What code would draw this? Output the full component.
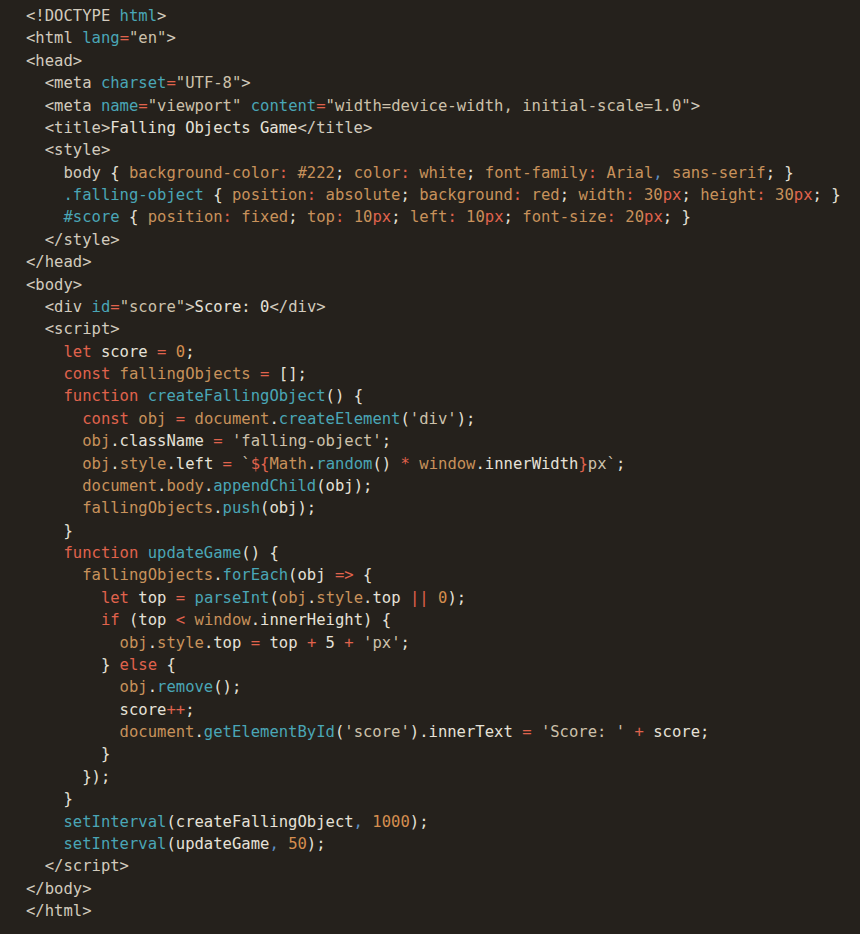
import { FC } from 'react';

// token colours
const T = 'text-[#d2cbbe]'; // tags / punctuation
const P = 'text-[#e6e1d8]'; // plain identifiers
const A = 'text-[#4aa6b6]'; // attrs, functions, selectors
const K = 'text-[#e0634d]'; // keywords, operators
const V = 'text-[#c8925b]'; // variables, css props
const N = 'text-[#d58e4f]'; // numbers
const S = 'text-[#cdc1ab]'; // strings
const B = 'text-[#5d8fc4]'; // commas in args

type Tok = [string, string];

const lines: Tok[][] = [
  [[T, '<!DOCTYPE '], [A, 'html'], [T, '>']],
  [[T, '<html '], [A, 'lang'], [K, '='], [S, '"en"'], [T, '>']],
  [[T, '<head>']],
  [[T, '  <meta '], [A, 'charset'], [K, '='], [S, '"UTF-8"'], [T, '>']],
  [[T, '  <meta '], [A, 'name'], [K, '='], [S, '"viewport"'], [T, ' '], [A, 'content'], [K, '='], [S, '"width=device-width, initial-scale=1.0"'], [T, '>']],
  [[T, '  <title>'], [P, 'Falling Objects Game'], [T, '</title>']],
  [[T, '  <style>']],
  [[T, '    body '], [P, '{ '], [V, 'background-color'], [K, ':'], [V, ' #222'], [P, '; '], [V, 'color'], [K, ':'], [V, ' white'], [P, '; '], [V, 'font-family'], [K, ':'], [V, ' Arial'], [B, ','], [V, ' sans-serif'], [P, '; }']],
  [[T, '    '], [A, '.falling-object'], [P, ' { '], [V, 'position'], [K, ':'], [V, ' absolute'], [P, '; '], [V, 'background'], [K, ':'], [V, ' red'], [P, '; '], [V, 'width'], [K, ':'], [V, ' 30'], [K, 'px'], [P, '; '], [V, 'height'], [K, ':'], [V, ' 30'], [K, 'px'], [P, '; }']],
  [[T, '    '], [A, '#score'], [P, ' { '], [V, 'position'], [K, ':'], [V, ' fixed'], [P, '; '], [V, 'top'], [K, ':'], [V, ' 10'], [K, 'px'], [P, '; '], [V, 'left'], [K, ':'], [V, ' 10'], [K, 'px'], [P, '; '], [V, 'font-size'], [K, ':'], [V, ' 20'], [K, 'px'], [P, '; }']],
  [[T, '  </style>']],
  [[T, '</head>']],
  [[T, '<body>']],
  [[T, '  <div '], [A, 'id'], [K, '='], [S, '"score"'], [T, '>'], [P, 'Score: 0'], [T, '</div>']],
  [[T, '  <script>']],
  [[K, '    let'], [P, ' score '], [K, '='], [P, ' '], [N, '0'], [P, ';']],
  [[K, '    const'], [V, ' fallingObjects'], [P, ' '], [K, '='], [P, ' [];']],
  [[K, '    function'], [P, ' '], [A, 'createFallingObject'], [P, '() {']],
  [[K, '      const'], [V, ' obj'], [P, ' '], [K, '='], [V, ' document'], [P, '.'], [A, 'createElement'], [P, '('], [S, "'div'"], [P, ');']],
  [[V, '      obj'], [P, '.className '], [K, '='], [P, ' '], [S, "'falling-object'"], [P, ';']],
  [[V, '      obj'], [P, '.'], [V, 'style'], [P, '.left '], [K, '='], [P, ' '], [S, '`'], [K, '${'], [V, 'Math'], [P, '.'], [A, 'random'], [P, '() '], [K, '*'], [V, ' window'], [P, '.innerWidth'], [K, '}'], [S, 'px`'], [P, ';']],
  [[V, '      document'], [P, '.'], [V, 'body'], [P, '.'], [A, 'appendChild'], [P, '(obj);']],
  [[V, '      fallingObjects'], [P, '.'], [A, 'push'], [P, '(obj);']],
  [[P, '    }']],
  [[K, '    function'], [P, ' '], [A, 'updateGame'], [P, '() {']],
  [[V, '      fallingObjects'], [P, '.'], [A, 'forEach'], [P, '(obj '], [K, '=>'], [P, ' {']],
  [[K, '        let'], [P, ' top '], [K, '='], [P, ' '], [A, 'parseInt'], [P, '('], [V, 'obj'], [P, '.'], [V, 'style'], [P, '.top '], [K, '||'], [P, ' '], [N, '0'], [P, ');']],
  [[K, '        if'], [P, ' (top '], [K, '<'], [V, ' window'], [P, '.innerHeight) {']],
  [[V, '          obj'], [P, '.'], [V, 'style'], [P, '.top '], [K, '='], [P, ' top '], [K, '+'], [P, ' 5 '], [K, '+'], [P, ' '], [S, "'px'"], [P, ';']],
  [[P, '        } '], [K, 'else'], [P, ' {']],
  [[V, '          obj'], [P, '.'], [A, 'remove'], [P, '();']],
  [[P, '          score'], [K, '++'], [P, ';']],
  [[V, '          document'], [P, '.'], [A, 'getElementById'], [P, '('], [S, "'score'"], [P, ').innerText '], [K, '='], [P, ' '], [S, "'Score: '"], [P, ' '], [K, '+'], [P, ' score;']],
  [[P, '        }']],
  [[P, '      });']],
  [[P, '    }']],
  [[A, '    setInterval'], [P, '(createFallingObject'], [B, ','], [P, ' '], [N, '1000'], [P, ');']],
  [[A, '    setInterval'], [P, '(updateGame'], [B, ','], [P, ' '], [N, '50'], [P, ');']],
  [[T, '  </script>']],
  [[T, '</body>']],
  [[T, '</html>']],
];

const CodeLine: FC<{ toks: Tok[] }> = ({ toks }) => (
  <div className="h-[22.39px] whitespace-pre">
    {toks.map(([cls, txt], i) => (
      <span key={i} className={cls}>{txt}</span>
    ))}
  </div>
);

export default function App() {
  return (
    <div className="min-h-screen w-full bg-[#25211c] pl-[26px] pt-[5px] font-['DejaVu_Sans_Mono','Liberation_Mono',monospace] text-[15.55px] leading-[22.39px]">
      {lines.map((l, i) => (
        <CodeLine key={i} toks={l} />
      ))}
    </div>
  );
}
